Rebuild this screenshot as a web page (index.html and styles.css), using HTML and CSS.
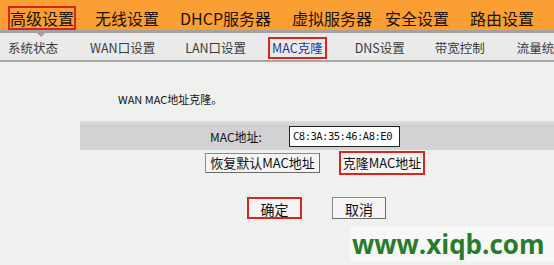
FILE: index.html
```html
<!DOCTYPE html>
<html lang="zh">
<head>
<meta charset="utf-8">
<link rel="stylesheet" href="styles.css">
</head>
<body>
<div class="topnav">
  <span class="tn active">高级设置</span>
  <span class="tn">无线设置</span>
  <span class="tn">DHCP服务器</span>
  <span class="tn t4">虚拟服务器</span>
  <span class="tn">安全设置</span>
  <span class="tn">路由设置</span>
  <span class="pointer"></span>
</div>
<div class="subnav">
  <span class="sn s1">系统状态</span>
  <span class="sn s2">WAN口设置</span>
  <span class="sn s3">LAN口设置</span>
  <span class="sn s4 active">MAC克隆</span>
  <span class="sn s5">DNS设置</span>
  <span class="sn s6">带宽控制</span>
  <span class="sn s7">流量统计</span>
</div>
<div class="content">
  <div class="title">WAN MAC地址克隆。</div>
  <div class="band">
    <span class="label">MAC地址:</span>
    <span class="input">C8:3A:35:46:A8:E0</span>
  </div>
  <div class="btnrow">
    <span class="btn restore">恢复默认MAC地址</span>
    <span class="btn clone">克隆MAC地址</span>
  </div>
  <div class="okrow">
    <span class="btn ok">确定</span>
    <span class="btn cancel">取消</span>
  </div>
  <div class="wm">www.xiqb.com</div>
</div>
</body>
</html>
```
FILE: styles.css
```css
* { box-sizing: border-box; }
html, body { margin: 0; padding: 0; }
body {
  width: 554px;
  height: 265px;
  overflow: hidden;
  background: #eef1ee;
  font-family: "Noto Sans CJK SC", "DejaVu Sans", sans-serif;
  color: #111;
}
.topnav {
  position: relative;
  height: 33px;
  background: #fb9e33;
  border-bottom: 3px solid #a4a2a0;
  display: flex;
  align-items: flex-start;
  padding: 6px 0 0 8px;
}
.tn {
  font-size: 16px;
  line-height: 20px;
  height: 24px;
  padding: 0;
  border: 2px solid transparent;
  color: #1a1208;
  white-space: nowrap;
  margin-right: 17px;
}
.tn.t4 { margin-right: 9px; }
.tn.active { border-color: #d8261c; }
.pointer {
  position: absolute;
  left: 34px;
  top: 30px;
  width: 0; height: 0;
  border-left: 7px solid transparent;
  border-right: 7px solid transparent;
  border-top: 7px solid #a4a2a0;
}
.subnav {
  height: 29px;
  background: #e9eae9;
  border-bottom: 2px solid #a7a7a7;
  display: flex;
  align-items: center;
  padding-left: 8px;
  padding-top: 3px;
  font-size: 12.5px;
  color: #3a3a3a;
}
.sn { white-space: nowrap; line-height: 16px; padding: 1px 2px; border: 2px solid transparent; }
.s1 { margin-left: -4px; margin-right: 24px; }
.s2 { margin-right: 22px; }
.s3 { margin-right: 18px; }
.s4 { color: #1a37a8; border-color: #d8261c; margin-right: 24px; }
.s5 { margin-right: 22px; }
.s6 { margin-right: 24px; }
.content { padding-top: 30px; position: relative; height: 200px; }
.title { padding-left: 118px; font-size: 11px; line-height: 14px; height: 29px; }
.band {
  margin-left: 80px;
  height: 29px;
  background: #d3d1d3;
  border-top: 2px solid #dcdcdc;
  display: flex;
  align-items: center;
  font-size: 12px;
}
.label { margin-left: 130px; width: 79px; }
.input {
  width: 111px;
  height: 21px;
  background: #fff;
  border: 1px solid #222;
  font-size: 10.5px;
  line-height: 19px;
  padding-left: 3px;
  font-family: "DejaVu Sans Mono", monospace;
  letter-spacing: -0.5px;
  white-space: nowrap;
  overflow: hidden;
}
.btnrow { display: flex; padding-left: 205px; gap: 19px; margin-top: 1px; align-items: center; height: 24px; }
.btn {
  font-size: 13px;
  line-height: 16px;
  background: #f4f4f4;
  border: 1px solid #8a8a8a;
  border-right-color: #6b6b6b;
  border-bottom-color: #6b6b6b;
  text-align: center;
  padding: 1px 0;
  white-space: nowrap;
}
.restore { width: 115px; height: 20px; }
.clone { width: 86px; height: 24px; border: 2px solid #d8261c; padding: 2px 0; }
.okrow { display: flex; padding-left: 247px; gap: 30px; margin-top: 22px; }
.ok { width: 55px; height: 22px; border: 2px solid #d8261c; font-size: 14px; line-height: 18px; }
.cancel { width: 54px; height: 22px; font-size: 14px; line-height: 18px; padding: 2px 0; }
.wm {
  position: absolute;
  left: 350px;
  top: 165px;
  width: 204px;
  padding-left: 2px;
  background: #f6f8f6;
  font-family: "Open Sans", "DejaVu Sans", sans-serif;
  font-weight: 700;
  font-size: 26px;
  line-height: 34px;
  color: #2a7a2c;
  white-space: nowrap;
}
```
